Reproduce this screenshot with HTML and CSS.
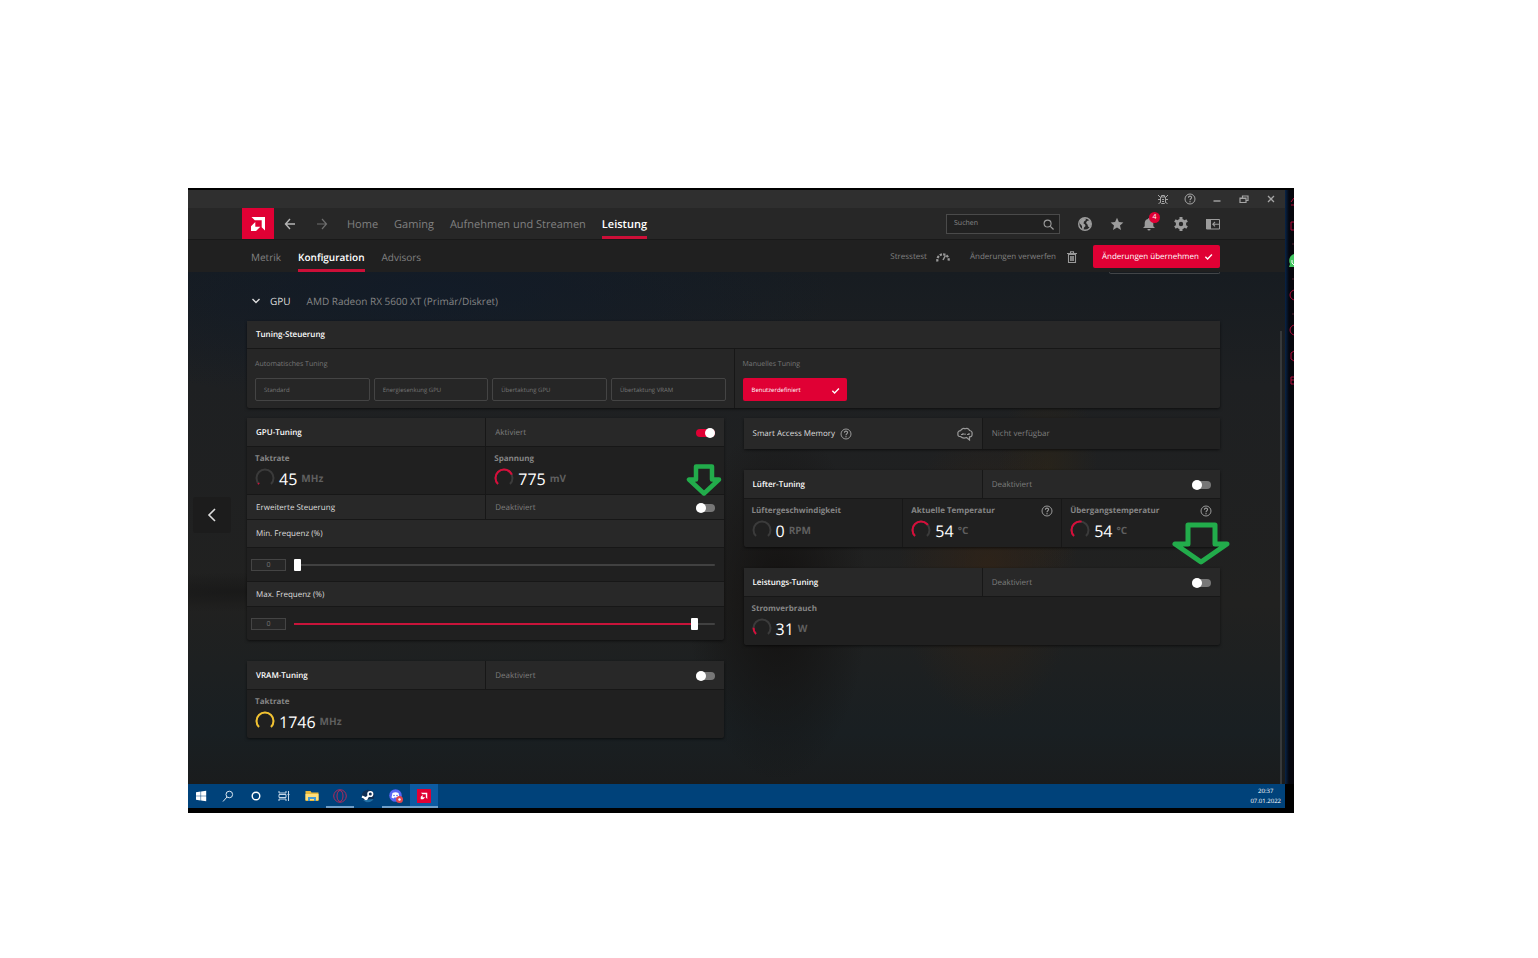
FILE: index.html
```
<!DOCTYPE html>
<html lang="de">
<head>
    <meta charset="UTF-8">
    <meta name="viewport" content="width=device-width, initial-scale=1.0">
    <title>AMD Software - Leistung</title>
    <link rel="stylesheet" href="styles.css">
</head>
<body>
    <!-- shared icons -->
    <svg class="sprite" aria-hidden="true">
        <symbol id="amd" viewBox="0 0 14 14">
            <path fill="#fff" d="M.5 0H14v13.500l-3.300-3.300V3.300H3.800z"/>
            <path fill="#fff" d="M4.300 4.900L0 9.200V14H5L9.300 9.700H4.300z"/>
        </symbol>
        <symbol id="help" viewBox="0 0 12 12">
            <circle cx="6" cy="6" r="5" fill="none" stroke="currentColor"/>
            <path d="M4.400 4.800c0-2.200 3.200-2.100 3.200-.2C7.600 5.800 6 5.800 6 7.200" fill="none" stroke="currentColor" stroke-width="1.100"/>
            <circle cx="6" cy="8.800" r=".7" fill="currentColor"/>
        </symbol>
        <symbol id="check" viewBox="0 0 10 10">
            <path d="M1.500 5.200l2.500 2.500 4.800-5" fill="none" stroke="#fff" stroke-width="1.500"/>
        </symbol>
        <symbol id="arrow-down" viewBox="0 0 58 43" preserveAspectRatio="none">
            <path d="M16 3H43V22H55L29 40 3 22H16z" fill="none" stroke="#22ac4b" stroke-width="5" stroke-linejoin="round"/>
        </symbol>
        <symbol id="arrow-down-small" viewBox="0 0 36 32">
            <path d="M10 2.500H26V15.500H33L18 29.500 3 15.500H10z" fill="none" stroke="#22ac4b" stroke-width="4.500" stroke-linejoin="round"/>
        </symbol>
    </svg>

    <div class="desktop">
        <div class="screen">
            <div class="app">
                <div class="titlebar">
                    <button aria-label="Fehler melden"><svg viewBox="0 0 12 12"><path d="M3.500 4h5v5.500l-1 1h-3l-1-1zM4.500 4V2.500h3V4M1 2l2.500 2.500M11 2L8.500 4.500M1 6.500h2.500M8.500 6.500H11M1.500 11l2-2M10.500 11l-2-2M5 6.500h2M5 8.500h2" fill="none" stroke="currentColor"/></svg></button>
                    <button aria-label="Hilfe"><svg><use href="#help"/></svg></button>
                    <button aria-label="Minimieren"><svg viewBox="0 0 12 12"><path d="M2.500 8h7" stroke="currentColor" stroke-width="1.400"/></svg></button>
                    <button aria-label="Wiederherstellen"><svg viewBox="0 0 12 12"><path d="M2 5h6v4.500H2zM2 5.500h6M4.500 5V3H10v4.500H8" fill="none" stroke="currentColor" stroke-width="1.200"/></svg></button>
                    <button aria-label="Schließen"><svg viewBox="0 0 12 12"><path d="M3 3l6 6M9 3L3 9" stroke="currentColor" stroke-width="1.300"/></svg></button>
                </div>

                <header class="topnav">
                    <a class="logo" href="#" aria-label="AMD"><svg><use href="#amd"/></svg></a>
                    <button class="history" aria-label="Zurück"><svg viewBox="0 0 12 12"><path d="M6 1L1.500 6 6 11M1.500 6H11" fill="none" stroke="currentColor" stroke-width="1.400"/></svg></button>
                    <button class="history forward" aria-label="Vorwärts"><svg viewBox="0 0 12 12"><path d="M6 1l4.500 5L6 11M10.500 6H1" fill="none" stroke="currentColor" stroke-width="1.200"/></svg></button>
                    <nav class="tabs">
                        <a href="#">Home</a>
                        <a href="#">Gaming</a>
                        <a href="#">Aufnehmen und Streamen</a>
                        <a class="active" href="#">Leistung</a>
                    </nav>
                    <div class="tools">
                        <div class="search">
                            <input type="text" placeholder="Suchen" aria-label="Suchen">
                            <svg viewBox="0 0 12 12"><circle cx="5" cy="5" r="3.800" fill="none" stroke="currentColor" stroke-width="1.200"/><path d="M8 8l3.500 3.500" stroke="currentColor" stroke-width="1.400"/></svg>
                        </div>
                        <button aria-label="Web"><svg viewBox="0 0 14 14"><circle cx="7" cy="7" r="6.300" fill="none" stroke="currentColor" stroke-width="1.400"/><path fill="currentColor" d="M2 3.500L5 1l3 .5-.5 2L6 4.500 5.500 6.500 7 7.500 7.500 9 6 10.500 5.500 13 4 11.500V9L1.500 6zM9 4l3-1 1.300 4-1.500 3.500L10 9.500 9.500 7.500 8 6z"/></svg></button>
                        <button aria-label="Favoriten"><svg viewBox="0 0 14 14"><path fill="currentColor" d="M7 .8l1.900 4.100 4.500.5-3.400 3 1 4.500L7 10.600l-4 2.300 1-4.500-3.400-3 4.500-.5z"/></svg></button>
                        <button class="bell" aria-label="Benachrichtigungen"><svg viewBox="0 0 14 14"><path fill="currentColor" d="M6 2a1 1 0 0 1 2 0c2.300.5 3.300 2.200 3.300 4.500v2.700L13 11H1l1.700-1.800V6.500C2.700 4.200 3.700 2.500 6 2zM5.400 12h3.200a1.600 1.600 0 0 1-3.200 0z"/></svg><span class="badge">4</span></button>
                        <button aria-label="Einstellungen"><svg viewBox="0 0 14 14"><circle cx="7" cy="7" r="3.700" fill="none" stroke="currentColor" stroke-width="3"/><path d="M7 0v2.400M7 11.600V14M.9 3.500l2.100 1.200M11 9.300l2.100 1.200M.9 10.500L3 9.300M11 4.700l2.100-1.200" stroke="currentColor" stroke-width="3"/></svg></button>
                        <button aria-label="Seitenleiste"><svg viewBox="0 0 14 14"><path d="M.5 2.500h13v9.500H.5z" fill="none" stroke="currentColor"/><path d="M0 2h5v10H0z" fill="currentColor"/><path d="M13 7.200H7M9 5L6.800 7.200 9 9.400" fill="none" stroke="currentColor" stroke-width="1.100"/></svg></button>
                    </div>
                </header>

                <div class="subnav">
                    <nav class="tabs">
                        <a href="#">Metrik</a>
                        <a class="active" href="#">Konfiguration</a>
                        <a href="#">Advisors</a>
                    </nav>
                    <div class="actions">
                        <button class="plain">Stresstest <svg viewBox="0 0 14 12"><path d="M1.500 10.500A5.700 5.700 0 1 1 12.500 10.500" fill="none" stroke="currentColor" stroke-width="2.200" stroke-dasharray="2.300 1.200"/><path d="M9.500 4.500L7 9" stroke="currentColor" stroke-width="1.500"/></svg></button>
                        <button class="plain">Änderungen verwerfen <svg class="trash" viewBox="0 0 10 12"><path d="M1.500 3.500h7v8h-7zM0 2.500h10M3.500 2V.8h3V2M3.700 5v5M5 5v5M6.300 5v5" fill="none" stroke="currentColor" stroke-width="1.100"/></svg></button>
                        <button class="apply">Änderungen übernehmen <svg><use href="#check"/></svg></button>
                    </div>
                </div>

                <main class="content">
                    <div class="scrolled-box"></div>
                    <button class="prev" aria-label="Zurück"><svg viewBox="0 0 10 14"><path d="M8 1L2 7l6 6" fill="none" stroke="currentColor" stroke-width="1.600"/></svg></button>
                    <div class="scrollbar"></div>

                    <h1 class="device">
                        <svg viewBox="0 0 10 10"><path d="M1.500 3L5 6.500 8.500 3" fill="none" stroke="currentColor" stroke-width="1.400"/></svg>
                        GPU <span>AMD Radeon RX 5600 XT (Primär/Diskret)</span>
                    </h1>

                    <section class="card presets">
                        <h2 class="row">Tuning-Steuerung</h2>
                        <div class="split">
                            <div class="preset-group">
                                <p>Automatisches Tuning</p>
                                <div class="auto">
                                    <button>Standard</button>
                                    <button>Energiesenkung GPU</button>
                                    <button>Übertaktung GPU</button>
                                    <button>Übertaktung VRAM</button>
                                </div>
                            </div>
                            <div class="preset-group">
                                <p>Manuelles Tuning</p>
                                <button class="custom">Benutzerdefiniert <svg><use href="#check"/></svg></button>
                            </div>
                        </div>
                    </section>

                    <div class="columns">
                        <div class="column">
                            <section class="card">
                                <div class="split head">
                                    <h2 class="row">GPU-Tuning</h2>
                                    <label class="row state">Aktiviert <input class="toggle" type="checkbox" checked></label>
                                </div>
                                <div class="split">
                                    <div class="metric">
                                        <h3>Taktrate</h3>
                                        <div class="reading">
                                            <svg class="gauge" viewBox="0 0 20 20"><path d="M4 16A8.500 8.500 0 1 1 16 16"/><path class="value" pathLength="100" stroke-dasharray="3 200" d="M4 16A8.500 8.500 0 1 1 16 16"/></svg>
                                            <b>45</b> <span>MHz</span>
                                        </div>
                                    </div>
                                    <div class="metric">
                                        <h3>Spannung</h3>
                                        <div class="reading">
                                            <svg class="gauge" viewBox="0 0 20 20"><path d="M4 16A8.500 8.500 0 1 1 16 16"/><path class="value" pathLength="100" stroke-dasharray="75 200" d="M4 16A8.500 8.500 0 1 1 16 16"/></svg>
                                            <b>775</b> <span>mV</span>
                                        </div>
                                        <svg class="marker small"><use href="#arrow-down-small"/></svg>
                                    </div>
                                </div>
                                <div class="split">
                                    <h3 class="row sub">Erweiterte Steuerung</h3>
                                    <label class="row sub state">Deaktiviert <input class="toggle" type="checkbox"></label>
                                </div>
                                <label class="row" for="minFreq">Min. Frequenz (%)</label>
                                <div class="slider">
                                    <input type="text" value="0" aria-label="Min. Frequenz Wert">
                                    <input type="range" id="minFreq" min="0" max="100" value="0" style="--fill: 0%">
                                </div>
                                <label class="row sub" for="maxFreq">Max. Frequenz (%)</label>
                                <div class="slider">
                                    <input type="text" value="0" aria-label="Max. Frequenz Wert">
                                    <input type="range" id="maxFreq" min="0" max="100" value="96" style="--fill: 96%">
                                </div>
                            </section>

                            <section class="card">
                                <div class="split head">
                                    <h2 class="row">VRAM-Tuning</h2>
                                    <label class="row state">Deaktiviert <input class="toggle" type="checkbox"></label>
                                </div>
                                <div class="metric">
                                    <h3>Taktrate</h3>
                                    <div class="reading">
                                        <svg class="gauge yellow" viewBox="0 0 20 20"><path d="M4 16A8.500 8.500 0 1 1 16 16"/><path class="value" pathLength="100" stroke-dasharray="100 200" d="M4 16A8.500 8.500 0 1 1 16 16"/></svg>
                                        <b>1746</b> <span>MHz</span>
                                    </div>
                                </div>
                            </section>
                        </div>

                        <div class="column">
                            <section class="card sam">
                                <div class="split">
                                    <h2 class="row">Smart Access Memory <svg class="help"><use href="#help"/></svg>
                                        <svg class="brain" viewBox="0 0 16 14"><path d="M3.500 9.500C1.500 9.500.5 8.500 1 7 .3 5 2 3.700 3.500 3.700 4.500 1.500 7 1 8 1.800 10 .8 12 1.800 12.500 3.500c2 .2 3 2 2.500 3.500.4 2-1 3-2.500 2.800V13L9.500 10.500c-2 .8-4.500.5-6-1zM4 7.500h2V6M8 8V6.500M12 6v1.500h-2" fill="none" stroke="currentColor" stroke-width="1.200"/></svg>
                                    </h2>
                                    <span class="row state">Nicht verfügbar</span>
                                </div>
                            </section>

                            <section class="card">
                                <div class="split head">
                                    <h2 class="row">Lüfter-Tuning</h2>
                                    <label class="row state">Deaktiviert <input class="toggle" type="checkbox"></label>
                                </div>
                                <div class="thirds">
                                    <div class="metric">
                                        <h3>Lüftergeschwindigkeit</h3>
                                        <div class="reading">
                                            <svg class="gauge" viewBox="0 0 20 20"><path d="M4 16A8.500 8.500 0 1 1 16 16"/></svg>
                                            <b>0</b> <span>RPM</span>
                                        </div>
                                    </div>
                                    <div class="metric">
                                        <h3>Aktuelle Temperatur <svg class="help"><use href="#help"/></svg></h3>
                                        <div class="reading">
                                            <svg class="gauge" viewBox="0 0 20 20"><path d="M4 16A8.500 8.500 0 1 1 16 16"/><path class="value" pathLength="100" stroke-dasharray="70 200" d="M4 16A8.500 8.500 0 1 1 16 16"/></svg>
                                            <b>54</b> <span>°C</span>
                                        </div>
                                    </div>
                                    <div class="metric">
                                        <h3>Übergangstemperatur <svg class="help"><use href="#help"/></svg></h3>
                                        <div class="reading">
                                            <svg class="gauge" viewBox="0 0 20 20"><path d="M4 16A8.500 8.500 0 1 1 16 16"/><path class="value" pathLength="100" stroke-dasharray="54 200" d="M4 16A8.500 8.500 0 1 1 16 16"/></svg>
                                            <b>54</b> <span>°C</span>
                                        </div>
                                        <svg class="marker large"><use href="#arrow-down"/></svg>
                                    </div>
                                </div>
                            </section>

                            <section class="card">
                                <div class="split head">
                                    <h2 class="row">Leistungs-Tuning</h2>
                                    <label class="row state">Deaktiviert <input class="toggle" type="checkbox"></label>
                                </div>
                                <div class="metric">
                                    <h3>Stromverbrauch</h3>
                                    <div class="reading">
                                        <svg class="gauge" viewBox="0 0 20 20"><path d="M4 16A8.500 8.500 0 1 1 16 16"/><path class="value" pathLength="100" stroke-dasharray="17 200" d="M4 16A8.500 8.500 0 1 1 16 16"/></svg>
                                        <b>31</b> <span>W</span>
                                    </div>
                                </div>
                            </section>
                        </div>
                    </div>
                </main>
            </div>

            <!-- edge of the window behind -->
            <div class="edge">
                <svg viewBox="0 0 9 220" width="9" height="220">
                    <g fill="none" stroke="#b00d3a">
                        <path d="M9 8L6 12M6 15h3M6 32v8h3M6 32h3"/>
                        <circle cx="10" cy="105" r="5"/><circle cx="10" cy="140" r="5"/>
                        <path d="M9 161l-3 2v6l3 2M9 187H6v7h3M6 190h3"/>
                    </g>
                    <path d="M9 64C5 65 3 70 5 74l-1 3h5z" fill="#42c560"/>
                    <path d="M7 70v3l2 2" stroke="#fff" fill="none"/>
                    <path d="M7 54h2M7 89h2M7 124h2" stroke="#53202f"/>
                </svg>
            </div>
        </div>

        <footer class="taskbar">
            <div class="pinned">
                <button class="start" aria-label="Start"><svg viewBox="0 0 14 14"><path fill="#fff" d="M2 3.200l4.600-.7v4.200H2zM7.100 2.400L12.200 1.700v5H7.100zM2 7.200h4.600v4.200L2 10.800zM7.100 7.200h5.100v5L7.100 11.500z"/></svg></button>
                <button aria-label="Suche"><svg viewBox="0 0 14 14"><circle cx="8.300" cy="5.500" r="3.300" fill="none" stroke="#dce8f2"/><path d="M6 8l-4 4.500" stroke="#dce8f2"/></svg></button>
                <button aria-label="Cortana"><svg viewBox="0 0 14 14"><circle cx="7" cy="7" r="3.800" fill="none" stroke="#fff" stroke-width="1.400"/></svg></button>
                <button aria-label="Aktive Anwendungen"><svg viewBox="0 0 14 14"><path d="M2 2v2h7V2M2 12v-2h7v2M2 5.500h7v3H2zM11.500 2v10M10.500 5.500h2" fill="none" stroke="#c6d8e8"/></svg></button>
                <button aria-label="Explorer"><svg viewBox="0 0 14 14"><path fill="#e8b93c" d="M.5 2h5l1 1.500h7V12H.5z"/><path fill="#ffdf7a" d="M.5 5h13v6H.5z"/><path fill="#459bd4" d="M3 12V8h8v4H9V10H5v2z"/></svg></button>
                <button class="running" aria-label="Opera GX"><svg viewBox="0 0 14 14"><g fill="none" stroke="#b02a5c"><circle cx="7" cy="7" r="6.300"/><ellipse cx="7" cy="7" rx="3" ry="5.500"/></g></svg></button>
                <button aria-label="Steam"><svg viewBox="0 0 14 14"><circle cx="7" cy="7" r="6.300" fill="#103055"/><path d="M2 11a6.300 6.300 0 0 0 10.500-1z" fill="#1f6fa5"/><circle cx="9.300" cy="5" r="2.300" fill="#103055" stroke="#fff" stroke-width="1.600"/><path d="M1 7.500l4 2L8 6.500" fill="none" stroke="#fff" stroke-width="2.200"/><circle cx="5" cy="9.500" r="1.800" fill="#fff"/></svg></button>
                <button class="running" aria-label="Discord"><svg viewBox="0 0 14 14"><circle cx="6.500" cy="6.500" r="6.300" fill="#5865f2"/><path fill="#fff" d="M3.500 4c2-1 4-1 6 0l1 4.500-2 1-.7-1H5.200l-.7 1-2-1z"/><circle cx="5" cy="6.500" r=".8" fill="#5865f2"/><circle cx="8" cy="6.500" r=".8" fill="#5865f2"/><circle cx="10.500" cy="10.500" r="3.500" fill="#e2444b"/><circle cx="10.500" cy="10.500" r="1.200" fill="#fff"/></svg></button>
                <button class="running current" aria-label="AMD Software"><svg viewBox="0 0 14 14"><path fill="#e00034" d="M0 0h14v14H0z"/><use href="#amd" x="3.500" y="3.500" width="7" height="7"/></svg></button>
            </div>
            <div class="clock"><span>20:37</span><span>07.01.2022</span></div>
        </footer>
    </div>
</body>
</html>
```
FILE: styles.css
```
* {
    box-sizing: border-box;
}
body {
    margin: 0;
    padding: 188px 244px 0 188px;
    background-color: #fff;
    font-family: "Open Sans", "Noto Sans", sans-serif;
    font-size: 8px;
    line-height: 12px;
    text-rendering: geometricPrecision;
    color: #ddd;
}
h1, h2, h3, p {
    margin: 0;
    font-size: 8px;
    font-weight: 400;
}
a {
    color: inherit;
    text-decoration: none;
}
button {
    padding: 0;
    border: none;
    background: none;
    color: inherit;
    font: inherit;
    text-rendering: inherit;
    cursor: pointer;
}
input {
    margin: 0;
    font: inherit;
    text-rendering: inherit;
}
svg {
    display: block;
    flex: none;
}
.sprite {
    position: absolute;
    width: 0;
    height: 0;
}

.desktop {
    padding: 2px 0 5px;
    background-color: #000;
}
.screen {
    display: flex;
}
.app {
    flex: 1;
    background-color: #1b1e20;
}
.edge {
    width: 9px;
    background: linear-gradient(90deg, #082448, #05070f 4px, #07060b);
}

/* title bar */
.titlebar {
    display: flex;
    justify-content: flex-end;
    align-items: center;
    gap: 15px;
    height: 18px;
    padding-right: 8px;
    background-color: #2f2f2f;
    color: #a5a5a5;
}
.titlebar svg {
    width: 12px;
    height: 12px;
}

/* navigation */
.topnav {
    display: flex;
    align-items: center;
    height: 31px;
    padding: 0 65px 0 54px;
    background-color: #272727;
}
.logo {
    display: flex;
    align-items: center;
    justify-content: center;
    width: 32px;
    height: 31px;
    background-color: #e00034;
}
.logo svg {
    width: 14px;
    height: 14px;
}
.history {
    margin-left: 10px;
    color: #b5b5b5;
}
.history svg {
    width: 12px;
    height: 12px;
}
.forward {
    margin-left: 20px;
    color: #6e6e6e;
}
.tabs {
    display: flex;
    align-self: stretch;
    gap: 17px;
    color: #808080;
    font-size: 11px;
}
.topnav .tabs {
    gap: 16px;
    margin-left: 19px;
}
.tabs a {
    display: flex;
    align-items: center;
    border-bottom: 3px solid transparent;
    padding-top: 6px;
}
.tabs .active {
    color: #fff;
    font-weight: 600;
    border-bottom-color: #cc0f38;
}
.tools {
    display: flex;
    align-items: center;
    gap: 18px;
    margin-left: auto;
    color: #9c9c9c;
}
.tools button svg {
    width: 14px;
    height: 14px;
}
.search {
    display: flex;
    align-items: center;
    width: 114px;
    height: 20px;
    padding: 1px 5px 0 7px;
    border: 1px solid #4a4a4a;
    background-color: #212121;
}
.search input {
    flex: 1;
    min-width: 0;
    padding: 0;
    border: none;
    background: none;
    color: #ccc;
    font-size: 7px;
}
.search input::placeholder {
    color: #888;
}
.search svg {
    width: 11px;
    height: 11px;
}
.bell {
    position: relative;
}
.badge {
    position: absolute;
    top: -5px;
    right: -4px;
    width: 11px;
    height: 11px;
    border-radius: 50%;
    background-color: #e00034;
    color: #fff;
    font-size: 7px;
    line-height: 12px;
}

.subnav {
    display: flex;
    align-items: center;
    justify-content: space-between;
    height: 33px;
    padding: 0 65px 0 63px;
    border-top: 1px solid #191919;
    background-color: #202020;
}
.subnav .tabs {
    font-size: 10px;
}
.subnav .tabs a {
    padding-top: 4px;
}
.actions {
    display: flex;
    align-items: center;
}
.plain {
    display: flex;
    align-items: center;
    gap: 9px;
    margin-right: 20px;
    padding-top: 1px;
    color: #808080;
}
.plain svg {
    width: 14px;
    height: 12px;
    color: #999;
}
.plain + .plain {
    gap: 11px;
    margin-right: 16px;
}
.plain .trash {
    width: 10px;
}
.apply, .custom {
    display: flex;
    align-items: center;
    justify-content: space-between;
    width: 127px;
    height: 23px;
    padding: 1px 7px 0 9px;
    border-radius: 2px;
    background-color: #e00034;
    color: #fff;
}
.apply svg, .custom svg {
    width: 9px;
    height: 9px;
}

/* content */
.content {
    position: relative;
    height: 512px;
    padding: 0 65px 0 59px;
    background:
        radial-gradient(ellipse 90px 150px at 800px 300px, rgba(54, 36, 20, .6), transparent),
        radial-gradient(ellipse 50px 100px at 860px 200px, rgba(48, 38, 20, .5), transparent),
        radial-gradient(ellipse 90px 180px at 590px 330px, rgba(18, 16, 15, .9), transparent),
        radial-gradient(ellipse 200px 20px at 50px 320px, rgba(20, 20, 20, .6), transparent),
        radial-gradient(ellipse 400px 120px at 250px 20px, rgba(16, 27, 42, .7), transparent),
        linear-gradient(#171c21, #1e2022 22%, #212120 65%, #191f22 90%, #1a1c1d);
}
.scrolled-box {
    width: 111px;
    height: 2px;
    margin-left: auto;
    border: 1px solid #424548;
    border-top: none;
    border-radius: 0 0 2px 2px;
}
.prev {
    position: absolute;
    left: 5px;
    top: 225px;
    display: flex;
    align-items: center;
    justify-content: center;
    width: 38px;
    height: 36px;
    border-radius: 3px;
    background-color: #1c1c1c;
}
.prev svg {
    width: 10px;
    height: 14px;
}
.scrollbar {
    position: absolute;
    right: 3px;
    top: 59px;
    bottom: 0;
    width: 2px;
    background-color: #36393b;
}
.device {
    display: flex;
    align-items: center;
    height: 47px;
    padding: 7px 0 0 4px;
    font-size: 10px;
    line-height: 16px;
}
.device svg {
    width: 10px;
    height: 10px;
    margin-right: 9px;
}
.device span {
    margin-left: 16px;
    color: #858585;
}
.card {
    border-radius: 2px;
    background-color: #202020;
    box-shadow: 0 1px 3px rgba(0, 0, 0, .6);
}
.row {
    display: flex;
    align-items: center;
    height: 28px;
    padding: 1px 9px 0;
    border-bottom: 1px solid #171717;
    background-color: #282828;
}
.row.sub {
    height: 25px;
}
.presets .row, .head h2 {
    color: #fff;
    font-weight: 600;
}
.split {
    display: grid;
    grid-template-columns: 1fr 1fr;
}
.thirds {
    display: grid;
    grid-template-columns: 1fr 1fr 1fr;
}
.split > * + *, .thirds > * + * {
    border-left: 1px solid #171717;
}
.head .row {
    height: 29px;
}
.state {
    justify-content: space-between;
    color: #7d7d7d;
}

.presets {
    background-color: #262626;
}
.preset-group {
    height: 59px;
    padding: 8px 8px 0;
    color: #777;
    font-size: 6px;
}
.preset-group p {
    height: 21px;
    font-size: 7px;
    line-height: 15px;
}
.auto {
    display: grid;
    grid-template-columns: repeat(4, 1fr);
    gap: 4px;
}
.auto button {
    height: 23px;
    padding: 0 8px;
    border: 1px solid #444;
    border-radius: 2px;
    text-align: left;
}
.custom {
    width: 104px;
}

.columns {
    display: grid;
    grid-template-columns: 1fr 1fr;
    gap: 20px;
    margin-top: 10px;
}
.column {
    display: flex;
    flex-direction: column;
    gap: 21px;
}
.metric {
    position: relative;
    height: 48px;
    padding: 6px 8px 0;
}
.split .metric {
    border-bottom: 1px solid #171717;
}
.metric h3 {
    display: flex;
    justify-content: space-between;
    height: 12px;
    color: #858585;
    font-weight: 700;
}
.help {
    width: 12px;
    height: 12px;
    color: #999;
}
.reading {
    display: flex;
    align-items: center;
    height: 26px;
}
.reading b {
    margin: 2px 4px 0 4px;
    color: #fff;
    font-size: 16px;
    font-weight: 400;
}
.reading span {
    color: #5f5f5f;
    font-size: 10px;
    font-weight: 700;
}
.gauge {
    width: 20px;
    height: 20px;
    fill: none;
    stroke: #3b3b3b;
    stroke-width: 2;
}
.gauge .value {
    stroke: #d80d3a;
}
.yellow .value {
    stroke: #f2c230;
}
.sam .row {
    height: 31px;
    border-bottom: none;
}
.sam .state {
    background-color: #212121;
}
.sam .help {
    margin-left: 5px;
}
.brain {
    width: 16px;
    height: 14px;
    margin-left: auto;
    color: #999;
}

.toggle {
    appearance: none;
    display: flex;
    align-items: center;
    width: 19px;
    height: 8px;
    border-radius: 4px;
    background-color: #777;
}
.toggle::before {
    content: "";
    width: 10px;
    height: 10px;
    flex: none;
    border-radius: 50%;
    background-color: #fff;
}
.toggle:checked {
    justify-content: flex-end;
    background-color: #e00034;
}

.slider {
    display: flex;
    align-items: center;
    gap: 8px;
    height: 34px;
    padding: 1px 9px 0 4px;
    border-bottom: 1px solid #171717;
}
.slider:last-child {
    height: 33px;
    border-bottom: none;
}
.slider input[type=text] {
    width: 35px;
    height: 12px;
    padding: 1px 0 0;
    border: 1px solid #444;
    background-color: #262626;
    color: #777;
    font-size: 7px;
    text-align: center;
}
.slider input[type=range] {
    appearance: none;
    flex: 1;
    min-width: 0;
    height: 12px;
    background: linear-gradient(90deg, #c8143a var(--fill), #414141 var(--fill)) center / 100% 2px no-repeat;
}
.slider input[type=range]::-webkit-slider-thumb {
    appearance: none;
    width: 7px;
    height: 12px;
    border-radius: 1px;
    background-color: #fff;
}

/* hand drawn arrows over the toggles */
.marker {
    position: absolute;
    z-index: 1;
}
.marker.small {
    right: 2px;
    top: 17px;
    width: 36px;
    height: 32px;
}
.marker.large {
    right: -10px;
    top: 23px;
    width: 58px;
    height: 43px;
}

/* taskbar */
.taskbar {
    display: flex;
    justify-content: space-between;
    height: 24px;
    margin-right: 9px;
    background-color: #00427a;
}
.pinned {
    display: flex;
}
.pinned button {
    display: flex;
    align-items: center;
    justify-content: center;
    width: 28px;
}
.pinned .start {
    width: 26px;
}
.pinned svg {
    width: 14px;
    height: 14px;
}
.running {
    box-shadow: inset 0 -2px #6f9fca;
}
.pinned .current {
    background-color: #0d5ba2;
}
.clock {
    display: flex;
    flex-direction: column;
    justify-content: center;
    padding-right: 4px;
    color: #fff;
    font-size: 6px;
    line-height: 10px;
    text-align: center;
}
```
